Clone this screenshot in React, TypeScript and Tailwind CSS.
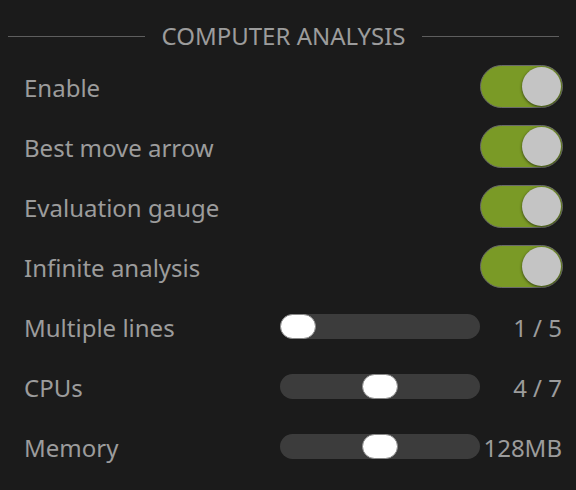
import React from "react";

function Toggle() {
  return (
    <div className="relative h-[43px] w-[83px] rounded-full border border-[#6a6a6a] bg-[#7a9a26]">
      <div className="absolute right-[1px] top-[1px] h-[39px] w-[39px] rounded-full bg-[#c4c4c4] shadow-[0_1px_3px_rgba(0,0,0,0.6)]" />
    </div>
  );
}

function Slider({ pos }: { pos: number }) {
  return (
    <div className="relative h-[25px] w-[200px] rounded-full bg-[#3c3c3c]">
      <div
        className="absolute top-0 h-[25px] w-[36px] rounded-full border border-[#888] bg-white"
        style={{ left: pos }}
      />
    </div>
  );
}

const toggles = ["Enable", "Best move arrow", "Evaluation gauge", "Infinite analysis"];
const sliders = [
  { label: "Multiple lines", pos: 0, value: "1 / 5" },
  { label: "CPUs", pos: 82, value: "4 / 7" },
  { label: "Memory", pos: 82, value: "128MB" },
];

export default function App() {
  return (
    <div className="h-[490px] w-[576px] bg-[#1b1b1b] pt-[16px] font-['Noto_Sans',sans-serif] text-[24px] text-[#9c9c9c]">
      <div className="flex h-[40px] items-center gap-[17px] pl-[8px] pr-[17px]">
        <div className="h-px flex-1 bg-[#5e5e5e]" />
        <span className="leading-none">COMPUTER ANALYSIS</span>
        <div className="h-px flex-1 bg-[#5e5e5e]" />
      </div>
      {toggles.map((t) => (
        <div key={t} className="flex h-[60px] items-center justify-between pl-[24px] pr-[13px]">
          <span className="pt-[3px]">{t}</span>
          <Toggle />
        </div>
      ))}
      {sliders.map((s) => (
        <div key={s.label} className="flex h-[60px] items-center pl-[24px] pr-[14px]">
          <span className="w-[256px] pt-[3px]">{s.label}</span>
          <Slider pos={s.pos} />
          <span className="flex-1 pt-[3px] text-right">{s.value}</span>
        </div>
      ))}
    </div>
  );
}
